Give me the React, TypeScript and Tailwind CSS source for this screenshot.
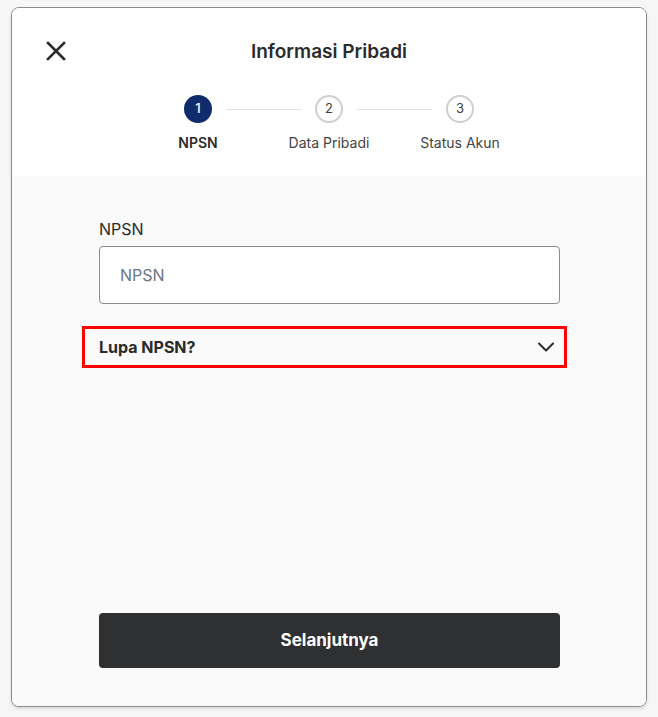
export default function App() {
    const steps = [
        { id: 1, label: "NPSN", active: true },
        { id: 2, label: "Data Pribadi", active: false },
        { id: 3, label: "Status Akun", active: false },
    ];

    return (
        <div className="min-h-[717px] bg-[#f6f6f6] px-[11px] pt-[7px] font-['Inter',sans-serif]">
            <div className="flex h-[700px] w-full flex-col overflow-hidden rounded-[8px] border border-[#8c8c8c] bg-white shadow-[0_2px_3px_rgba(0,0,0,0.12)]">
                {/* Header */}
                <div className="relative h-[168px] shrink-0 bg-white pt-[25px]">
                    <button className="absolute left-[33px] top-[32px] flex h-[22px] w-[22px] items-center justify-center text-[#2c2c2c]">
                        <svg width="20" height="20" viewBox="0 0 20 20" fill="none" stroke="currentColor" strokeWidth="2.6" strokeLinecap="square">
                            <path d="M2 2L18 18M18 2L2 18" />
                        </svg>
                    </button>
                    <h1 className="flex h-[38px] items-center justify-center text-[19px] font-semibold text-[#2b2b2b]">
                        Informasi Pribadi
                    </h1>

                    {/* Stepper */}
                    <div className="mt-[24px] flex items-center justify-center">
                        {steps.map((s, i) => (
                            <div key={s.id} className="flex items-center">
                                {s.active ? (
                                    <div className="flex h-[28px] w-[28px] items-center justify-center rounded-full bg-[#102c6c] text-[13px] font-medium text-white">
                                        {s.id}
                                    </div>
                                ) : (
                                    <div className="flex h-[28px] w-[28px] items-center justify-center rounded-full border-2 border-[#cfcfcf] bg-white text-[13px] text-[#3d3d3d]">
                                        {s.id}
                                    </div>
                                )}
                                {i < steps.length - 1 && <div className="mx-[14px] h-px w-[75px] bg-[#e2e2e2]" />}
                            </div>
                        ))}
                    </div>
                    <div className="mt-[11px] flex justify-center">
                        {steps.map((s) => (
                            <div
                                key={s.id}
                                className={`w-[131px] text-center text-[14px] leading-[18px] ${s.active ? "font-semibold text-[#2b2b2b]" : "text-[#444]"}`}
                            >
                                {s.label}
                            </div>
                        ))}
                    </div>
                </div>

                {/* Body */}
                <div className="flex flex-1 flex-col bg-[#fafafa] pb-[38px] pl-[87px] pr-[86px] pt-[41px]">
                    <label className="text-[16px] leading-[24px] text-[#2b2b2b]">NPSN</label>
                    <input
                        placeholder="NPSN"
                        className="mt-[5px] h-[58px] w-full rounded-[4px] border border-[#8a8a8a] bg-white px-[20px] text-[16px] text-[#2b2b2b] outline-none placeholder:text-[#6b7585]"
                    />

                    <div className="-ml-[17px] -mr-[7px] mt-[22px] flex h-[42px] items-center justify-between border-[3px] border-[#ff0000] pl-[14px] pr-[9px]">
                        <span className="text-[16px] font-bold text-[#2b2b2b]">Lupa NPSN?</span>
                        <svg width="18" height="18" viewBox="0 0 18 18" fill="none" stroke="#2b2b2b" strokeWidth="2" strokeLinecap="round" strokeLinejoin="round">
                            <path d="M2 5.5L9 12.5L16 5.5" />
                        </svg>
                    </div>

                    <button className="mt-auto h-[55px] w-full rounded-[4px] bg-[#2f3032] text-[17px] font-bold text-white">
                        Selanjutnya
                    </button>
                </div>
            </div>
        </div>
    );
}
